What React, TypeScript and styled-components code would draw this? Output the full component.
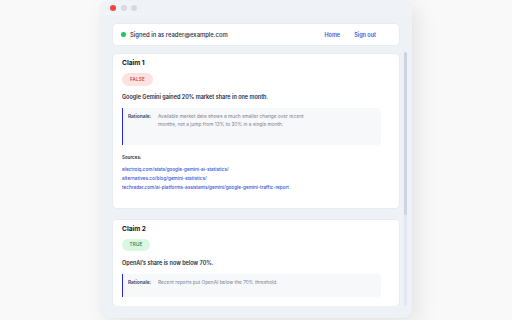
import React from 'react';
import styled, { createGlobalStyle } from 'styled-components';

const GlobalStyle = createGlobalStyle`
  html, body {
    margin: 0;
    padding: 0;
    background: #f9f9fa;
    font-family: Inter, "Noto Sans", sans-serif;
    -webkit-font-smoothing: antialiased;
  }
  * {
    box-sizing: border-box;
  }
`;

const Page = styled.div`
  width: 512px;
  height: 320px;
  display: flex;
  justify-content: center;
  padding-top: 1px;
  overflow: hidden;
`;

const Window = styled.div`
  width: 312px;
  height: 317px;
  background: #eef1f5;
  border-radius: 8px;
  box-shadow: 6px 6px 22px rgba(0, 0, 0, 0.09), 0 0 2px rgba(0, 0, 0, 0.05);
  display: flex;
  flex-direction: column;
  overflow: hidden;
`;

const TitleBar = styled.div`
  height: 14px;
  flex-shrink: 0;
  display: flex;
  align-items: center;
  gap: 4.5px;
  padding-left: 10px;
  background: #eff2f6;
  border-bottom: 1px solid #f3f5f8;
`;

const Light = styled.span<{ $color: string }>`
  display: block;
  flex-shrink: 0;
  width: 6px;
  height: 6px;
  border-radius: 50%;
  background: ${(p) => p.$color};
`;

const Body = styled.div`
  flex: 1;
  min-height: 0;
  display: flex;
  flex-direction: column;
  padding: 8px 5px 12px 12px;
`;

const HeaderCard = styled.div`
  height: 23px;
  flex-shrink: 0;
  margin-right: 7px;
  background: #fff;
  border: 1px solid #e7ebf0;
  border-radius: 5px;
  display: flex;
  align-items: center;
  justify-content: space-between;
  padding: 0 23px 0 8px;
`;

const Status = styled.div`
  display: flex;
  align-items: center;
  gap: 4.5px;
  font-size: 5.9px;
  font-weight: 500;
  color: #1f2937;
`;

const Dot = styled.span`
  display: block;
  flex-shrink: 0;
  width: 4.5px;
  height: 4.5px;
  border-radius: 50%;
  background: #22c55e;
`;

const Nav = styled.nav`
  display: flex;
  gap: 14px;
`;

const NavLink = styled.a`
  font-size: 5.5px;
  font-weight: 600;
  color: #3b5bdb;
  text-decoration: none;
`;

const Viewport = styled.div`
  flex: 1;
  min-height: 0;
  margin-top: 6px;
  display: flex;
`;

const List = styled.div`
  flex: 1;
  min-width: 0;
  overflow: hidden;
  padding: 1px 4px 0 0;
  display: flex;
  flex-direction: column;
  gap: 10px;
`;

const Track = styled.div`
  width: 3px;
  background: #e3e8ef;
  border-radius: 2px;
  display: flex;
  flex-direction: column;
`;

const Thumb = styled.div`
  border-radius: 2px;
  background: #cbd4e0;
`;

const Card = styled.section`
  flex-shrink: 0;
  background: #fff;
  border: 1px solid #e8ecf1;
  border-radius: 5px;
  padding: 5px 9px 9px;
  display: flex;
  flex-direction: column;
  align-items: flex-start;
`;

const ClaimTitle = styled.h3`
  margin: 0;
  font-size: 6.6px;
  line-height: 9px;
  font-weight: 700;
  color: #111827;
`;

const Badge = styled.span<{ $verdict: 'true' | 'false' }>`
  margin-top: 5px;
  height: 12.5px;
  display: inline-flex;
  align-items: center;
  padding: 0 ${(p) => (p.$verdict === 'false' ? '8px' : '7.5px')};
  border-radius: 7px;
  font-size: 4.6px;
  font-weight: 500;
  letter-spacing: 0.2px;
  background: ${(p) => (p.$verdict === 'false' ? '#fde2e2' : '#d9f7e3')};
  color: ${(p) => (p.$verdict === 'false' ? '#b83a3a' : '#2f7a4c')};
`;

const Statement = styled.p`
  margin: 7.5px 0 0;
  font-size: 5.5px;
  line-height: 8px;
  font-weight: 600;
  color: #1f2937;
`;

const Rationale = styled.div<{ $pb: number }>`
  align-self: stretch;
  margin: 7px 9px 0 0;
  background: #f7f8fa;
  border-left: 1px solid #2428d8;
  border-radius: 0 4px 4px 0;
  padding: 4px 6px ${(p) => p.$pb}px 5px;
  display: flex;
  gap: 7px;
`;

const RationaleLabel = styled.span`
  flex-shrink: 0;
  font-size: 4.8px;
  line-height: 8px;
  font-weight: 600;
  color: #374151;
`;

const RationaleText = styled.p`
  margin: 0;
  max-width: 152px;
  font-size: 4.8px;
  line-height: 8px;
  color: #7b8190;
`;

const Sources = styled.div`
  margin-top: 8.5px;
  padding-bottom: 7px;
  display: flex;
  flex-direction: column;
`;

const SourcesLabel = styled.span`
  font-size: 4.5px;
  line-height: 7px;
  font-weight: 600;
  color: #1f2937;
  margin-bottom: 4px;
`;

const SourceLink = styled.a`
  font-size: 4.65px;
  line-height: 9px;
  font-weight: 500;
  color: #3152d8;
  text-decoration: none;
`;

type Claim = {
  title: string;
  verdict: 'true' | 'false';
  statement: string;
  rationale: string;
  pb: number;
  sources?: string[];
};

const claims: Claim[] = [
  {
    title: 'Claim 1',
    verdict: 'false',
    statement: 'Google Gemini gained 20% market share in one month.',
    rationale:
      'Available market data shows a much smaller change over recent months, not a jump from 13% to 20% in a single month.',
    pb: 17,
    sources: [
      'electroiq.com/stats/google-gemini-ai-statistics/',
      'alternatives.co/blog/gemini-statistics/',
      'techradar.com/ai-platforms-assistants/gemini/google-gemini-traffic-report',
    ],
  },
  {
    title: 'Claim 2',
    verdict: 'true',
    statement: 'OpenAI\u2019s share is now below 70%.',
    rationale: 'Recent reports put OpenAI below the 70% threshold.',
    pb: 11,
  },
];

const ClaimCard = ({ claim }: { claim: Claim }) => (
  <Card>
    <ClaimTitle>{claim.title}</ClaimTitle>
    <Badge $verdict={claim.verdict}>{claim.verdict.toUpperCase()}</Badge>
    <Statement>{claim.statement}</Statement>
    <Rationale $pb={claim.pb}>
      <RationaleLabel>Rationale:</RationaleLabel>
      <RationaleText>{claim.rationale}</RationaleText>
    </Rationale>
    {claim.sources && (
      <Sources>
        <SourcesLabel>Sources:</SourcesLabel>
        {claim.sources.map((s) => (
          <SourceLink key={s} href={`https://${s}`}>
            {s}
          </SourceLink>
        ))}
      </Sources>
    )}
  </Card>
);

export default function App() {
  return (
    <Page>
      <GlobalStyle />
      <Window>
        <TitleBar>
          <Light $color="#f2453a" />
          <Light $color="#d6d9df" />
          <Light $color="#d6d9df" />
        </TitleBar>
        <Body>
          <HeaderCard>
            <Status>
              <Dot />
              <span>Signed in as reader@example.com</span>
            </Status>
            <Nav>
              <NavLink href="#">Home</NavLink>
              <NavLink href="#">Sign out</NavLink>
            </Nav>
          </HeaderCard>
          <Viewport>
            <List>
              {claims.map((c) => (
                <ClaimCard key={c.title} claim={c} />
              ))}
            </List>
            <Track>
              <Thumb style={{ height: `${Math.round(254 * 0.64)}px` }} />
            </Track>
          </Viewport>
        </Body>
      </Window>
    </Page>
  );
}
